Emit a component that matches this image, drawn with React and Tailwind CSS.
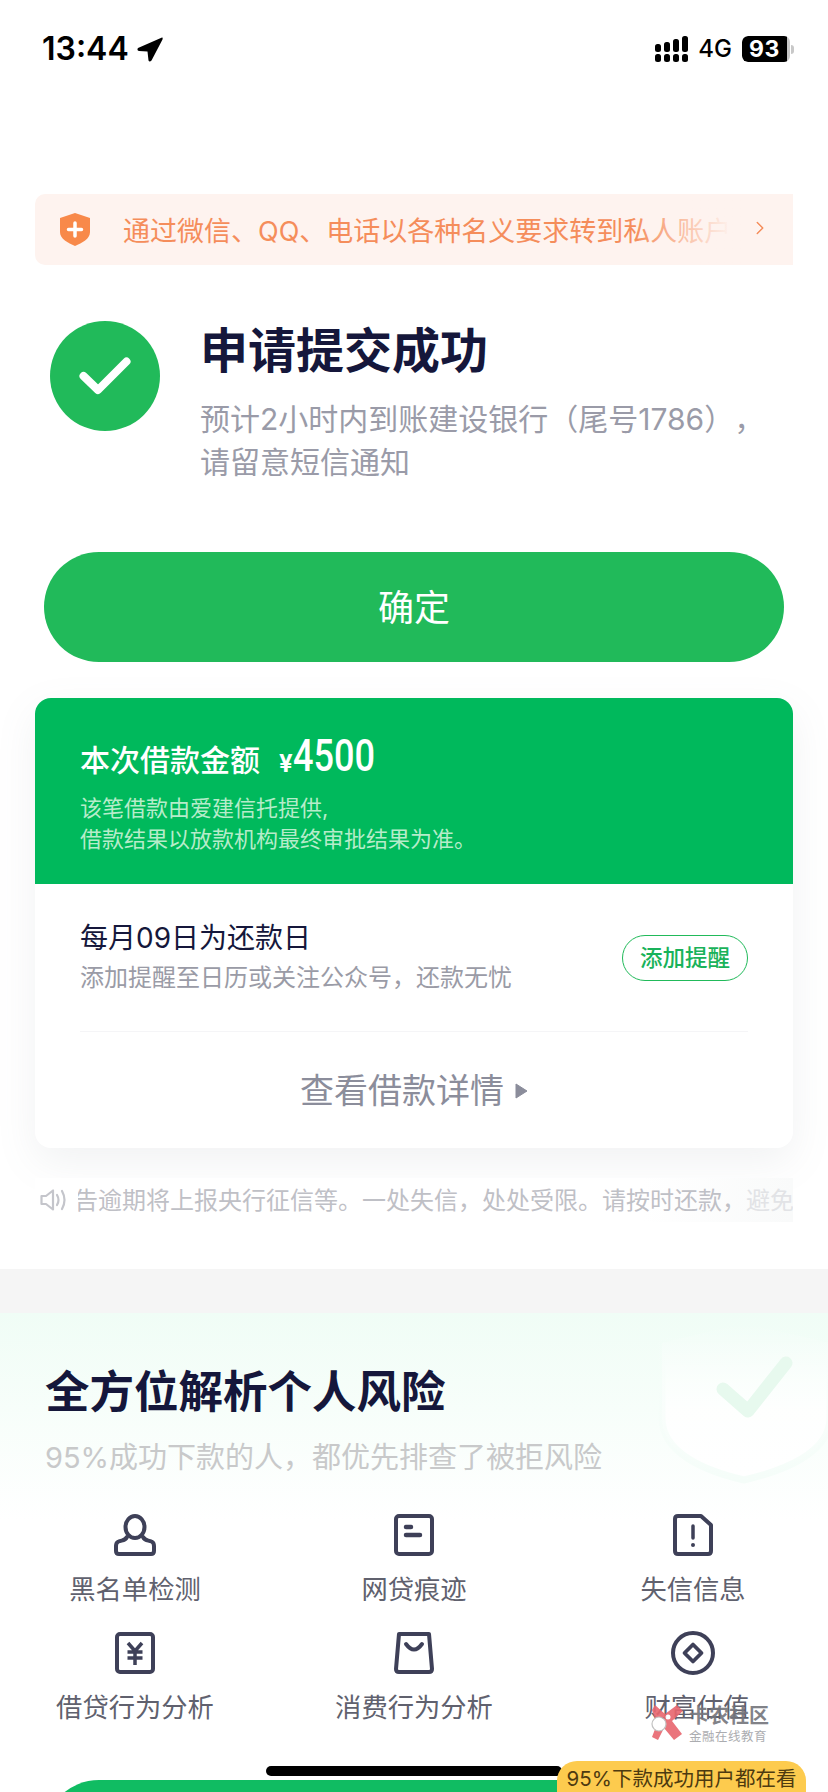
import { ChevronRight } from "lucide-react";

const FONT = "font-['Inter','Noto_Sans_CJK_SC',sans-serif] [text-spacing-trim:space-all]";

function SignalIcon() {
  const tops = [8, 6, 3, 0];
  return (
    <svg width="33" height="26" viewBox="0 0 33 26" fill="#000">
      {tops.map((top, i) => (
        <g key={i}>
          <rect x={i * 9} y={top} width="6" height={16 - top} rx="2.5" />
          <rect x={i * 9} y="18" width="6" height="8" rx="2.5" />
        </g>
      ))}
    </svg>
  );
}

function Battery() {
  return (
    <div className="flex items-center">
      <div className="flex h-[26px] w-[48px] overflow-hidden rounded-[6px] bg-[#c8c8c8]">
        <div className="flex h-full w-[45px] items-center justify-center rounded-l-[6px] bg-black text-[23px] font-bold tracking-[0.5px] text-white">
          93
        </div>
      </div>
      <div className="ml-[1px] h-[9px] w-[3px] rounded-r-[3px] bg-[#c8c8c8]" />
    </div>
  );
}

function StatusBar() {
  return (
    <div className="flex h-[98px] items-center justify-between pl-[42px] pr-[34px]">
      <div className="flex items-center gap-[8px]">
        <span className="text-[32px] leading-none font-semibold text-black">13:44</span>
        <svg width="26" height="25" viewBox="0 0 26 25">
          <path d="M25 0.5 L1 11 Q-0.5 13.5 2 14 L10.5 14.5 L11.5 23.5 Q12.5 25.5 14.5 23.5 L25.5 2.5 Q26 0 25 0.5 Z" fill="#000" />
        </svg>
      </div>
      <div className="flex items-center gap-[10px]">
        <SignalIcon />
        <span className="text-[24px] leading-none font-medium text-black">4G</span>
        <Battery />
      </div>
    </div>
  );
}

function NoticeBanner() {
  return (
    <div className="relative mx-[35px] mt-[96px] flex h-[71px] items-center overflow-hidden rounded-l-[10px] bg-[#fef3ef] pl-[25px]">
      <svg width="30" height="33" viewBox="0 0 30 33" className="shrink-0">
        <path d="M15 0 L30 5 V19 C30 26 22 30 15 33 C8 30 0 26 0 19 V5 Z" fill="#f8894a" />
        <path d="M15 10 V23 M8.5 16.5 H21.5" stroke="#fff" strokeWidth="3.5" strokeLinecap="round" />
      </svg>
      <div className="ml-[33px] w-[606px] overflow-hidden pt-[5px] text-[27px] whitespace-nowrap text-[#f58d5b]">
        通过微信、QQ、电话以各种名义要求转到私人账户
      </div>
      <div className="absolute top-0 right-[50px] h-full w-[110px] bg-gradient-to-r from-[#fef3ef00] to-[#fef3ef] to-90%" />
      <ChevronRight className="absolute top-[23px] right-[22px]" size={22} strokeWidth={1.6} color="#f58d5b" />
    </div>
  );
}

function ResultRow() {
  return (
    <div className="mt-[56px] flex pl-[50px]">
      <div className="flex h-[110px] w-[110px] shrink-0 items-center justify-center rounded-full bg-[#21ba5a]">
        <svg width="52" height="38" viewBox="0 0 52 38">
          <path d="M4.5 19 L19 33 L47.5 4.5" fill="none" stroke="#fff" strokeWidth="8" strokeLinecap="round" strokeLinejoin="round" />
        </svg>
      </div>
      <div className="ml-[40px]">
        <div className="h-[60px] text-[48px] leading-[60px] font-bold text-[#15173b]">申请提交成功</div>
        <div className="mt-[17px] w-[600px] text-[30px] leading-[43px] text-[#9a9ba8]">
          预计2小时内到账建设银行（尾号1786），
          <br />
          请留意短信通知
        </div>
      </div>
    </div>
  );
}

function LoanCard() {
  return (
    <div className="mx-[35px] mt-[36px] h-[450px] overflow-hidden rounded-[16px] bg-white shadow-[0_14px_40px_rgba(120,130,140,0.1)]">
      <div className="h-[186px] bg-[#00b95c] px-[45px] pt-[40px]">
        <div className="flex h-[44px] items-end">
          <span className="text-[30px] leading-[44px] font-medium text-white">本次借款金额</span>
          <span className="ml-[19px] text-[24px] leading-[36px] font-bold text-white">¥</span>
          <span className="mb-[4px] inline-block origin-left scale-x-[.82] font-['Roboto',sans-serif] text-[44px] leading-[44px] font-medium text-white">4500</span>
        </div>
        <div className="mt-[11px] text-[22px] leading-[31px] text-[#b6ecca]">
          该笔借款由爱建信托提供,
          <br />
          借款结果以放款机构最终审批结果为准。
        </div>
      </div>
      <div className="px-[45px]">
        <div className="flex h-[148px] items-center justify-between border-b border-[#f5f5f7]">
          <div>
            <div className="text-[28px] leading-[39px] text-[#15173b]">每月09日为还款日</div>
            <div className="text-[24px] leading-[39px] text-[#9a9ba6]">添加提醒至日历或关注公众号，还款无忧</div>
          </div>
          <div className="flex h-[46px] w-[126px] items-center justify-center rounded-full border border-[#21ba5a] text-[22.5px] font-medium text-[#19b25a]">
            添加提醒
          </div>
        </div>
        <div className="flex h-[115px] items-center justify-center pt-[2px]">
          <span className="text-[34px] text-[#8b8d9b]">查看借款详情</span>
          <svg width="13" height="16" viewBox="0 0 13 16" className="ml-[11px]">
            <path d="M1 1 L12 8 L1 15 Z" fill="#8b8d9b" strokeLinejoin="round" stroke="#8b8d9b" />
          </svg>
        </div>
      </div>
    </div>
  );
}

function Marquee() {
  return (
    <div className="relative mx-[35px] mt-[30px] flex h-[44px] items-center bg-gradient-to-r from-white from-80% to-[#f9fafa]">
      <svg width="28" height="24" viewBox="0 0 28 24" className="ml-[5px] shrink-0" fill="none" stroke="#c4c5cb" strokeWidth="2.2" strokeLinejoin="round" strokeLinecap="round">
        <path d="M1.5 8 H6 L13 2.5 V21.5 L6 16 H1.5 Z" />
        <path d="M17 7 Q20 12 17 17" />
        <path d="M22 3 Q27 12 22 21" />
      </svg>
      <div className="ml-[10px] w-[715px] overflow-hidden pt-[2px] text-[24px] whitespace-nowrap text-[#bfc0c6]">
        <span className="ml-[-4px]">告逾期将上报央行征信等。一处失信，处处受限。请按时还款，<span className="text-[#e2e3e6]">避免</span></span>
      </div>
    </div>
  );
}

function RiskIcon({ name }) {
  const stroke = { fill: "none", stroke: "#3e4058", strokeWidth: 4, strokeLinecap: "round", strokeLinejoin: "round" };
  if (name === "person") {
    return (
      <svg width="44" height="42" viewBox="0 0 44 42">
        <ellipse cx="22" cy="13" rx="9.5" ry="11" fill="#e9f8f0" {...stroke} />
        <path d="M14 23 C12 27 9 26 5.5 27.5 Q3 28.5 3 32 V37 Q3 40 6 40 H38 Q41 40 41 37 V32 Q41 28.5 38.5 27.5 C35 26 32 27 30 23" {...stroke} />
      </svg>
    );
  }
  if (name === "doc") {
    return (
      <svg width="40" height="42" viewBox="0 0 40 42">
        <rect x="2" y="2" width="36" height="38" rx="3" {...stroke} />
        <path d="M12 13 H17 M12 21 H26" {...stroke} strokeWidth="4.5" />
      </svg>
    );
  }
  if (name === "alert") {
    return (
      <svg width="40" height="42" viewBox="0 0 40 42">
        <path d="M5 2 H28 L38 11 V37 Q38 40 35 40 H5 Q2 40 2 37 V5 Q2 2 5 2 Z" {...stroke} />
        <path d="M20 12 V24" {...stroke} strokeWidth="3.5" />
        <circle cx="20" cy="31" r="2" fill="#3e4058" />
      </svg>
    );
  }
  if (name === "yuan") {
    return (
      <svg width="40" height="42" viewBox="0 0 40 42">
        <rect x="2" y="2" width="36" height="38" rx="3" {...stroke} />
        <path d="M13 11 L20 19 L27 11 M12.5 20 H27.5 M12.5 26 H27.5 M20 19 V33" {...stroke} strokeWidth="3.5" strokeLinecap="butt" />
      </svg>
    );
  }
  if (name === "bag") {
    return (
      <svg width="40" height="42" viewBox="0 0 40 42">
        <path d="M5 2 H35 L38 37 Q38 40 35 40 H5 Q2 40 2 37 Z" {...stroke} />
        <path d="M12 12 Q20 23 28 12" {...stroke} />
      </svg>
    );
  }
  return (
    <svg width="44" height="44" viewBox="0 0 44 44">
      <circle cx="22" cy="22" r="20" {...stroke} />
      <path d="M22 13.5 L30.5 22 L22 30.5 L13.5 22 Z" {...stroke} strokeWidth="3.8" />
    </svg>
  );
}

const RISK_ITEMS = [
  { icon: "person", label: "黑名单检测" },
  { icon: "doc", label: "网贷痕迹" },
  { icon: "alert", label: "失信信息" },
  { icon: "yuan", label: "借贷行为分析" },
  { icon: "bag", label: "消费行为分析" },
  { icon: "coin", label: "财富估值", shift: true },
];

function RiskSection() {
  return (
    <div className="relative bg-gradient-to-b from-[#f0fdf6] to-white to-[36%]">
      {/* watermark shield */}
      <svg className="absolute top-0 right-0" width="170" height="175" viewBox="0 0 170 175">
        <defs>
          <linearGradient id="shieldFill" x1="0" y1="0" x2="0" y2="1">
            <stop offset="0" stopColor="#fff" stopOpacity="0" />
            <stop offset="0.55" stopColor="#fff" stopOpacity="0.85" />
            <stop offset="1" stopColor="#fff" />
          </linearGradient>
          <linearGradient id="shieldEdge" x1="0" y1="0" x2="0" y2="1">
            <stop offset="0" stopColor="#f5fdf9" stopOpacity="0" />
            <stop offset="1" stopColor="#f5fdf9" />
          </linearGradient>
        </defs>
        <path d="M86 10 L172 30 V105 C172 140 125 158 86 167 C47 158 4 140 4 105 V30 Z" fill="url(#shieldFill)" stroke="url(#shieldEdge)" strokeWidth="7" />
        <path d="M65 76 L90 98 L128 50" fill="none" stroke="#e7f9ee" strokeWidth="13" strokeLinecap="round" strokeLinejoin="round" />
      </svg>
      <div className="relative pt-[57px]">
        <div className="px-[45px] text-[44.5px] leading-[44px] font-bold text-[#15173b]">全方位解析个人风险</div>
        <div className="mt-[26px] px-[45px] text-[29px] leading-[36px] text-[#c8c9ca]">95%成功下款的人，都优先排查了被拒风险</div>
        <div className="mt-[38px] grid grid-cols-[270px_288px_270px] gap-y-[24px]">
          {RISK_ITEMS.map((item) => (
            <div key={item.label} className="flex flex-col items-center">
              <div className="flex h-[42px] items-center">
                <RiskIcon name={item.icon} />
              </div>
              <div className={`mt-[16px] text-[26.3px] leading-[36px] text-[#60616e] ${item.shift ? "ml-[8px]" : ""}`}>{item.label}</div>
            </div>
          ))}
        </div>
      </div>
      <div className="mx-[44px] mt-[54px] h-[110px] rounded-full bg-[#10bc62]" />
    </div>
  );
}

function ForumMark() {
  return (
    <div className="absolute top-[1704px] left-[650px] flex items-start opacity-90">
      <svg width="34" height="37" viewBox="0 0 34 37">
        <path d="M5 1 L15 10 L27 1 L33 7 L22 17 L32 30 L24 36 L14 24 L8 36 L2 33 L7 20 L2 6 Z" fill="#e8666e" />
        <circle cx="9" cy="20" r="7" fill="#fff" stroke="#bbb" strokeWidth="1.2" />
        <circle cx="18" cy="13" r="2.5" fill="#fff" />
      </svg>
      <div className="ml-[5px]">
        <div className="text-[20px] leading-[25px] font-bold text-[#74757c]">卡农社区</div>
        <div className="text-[12.5px] leading-[16px] tracking-[0.5px] text-[#a3a4a8]">金融在线教育</div>
      </div>
    </div>
  );
}

export default function App() {
  return (
    <div className={`relative h-[1792px] w-[828px] overflow-hidden bg-white ${FONT}`}>
      <StatusBar />
      <NoticeBanner />
      <ResultRow />
      <div className="mx-[44px] mt-[68px] flex h-[110px] items-center justify-center rounded-full bg-[#21ba5a] pt-[2px] text-[36px] text-white">
        确定
      </div>
      <LoanCard />
      <Marquee />
      <div className="mt-[47px] h-[44px] bg-[#f5f5f5]" />
      <RiskSection />
      <ForumMark />
      {/* home indicator */}
      <div className="absolute top-[1766px] left-[266px] h-[10px] w-[296px] rounded-full bg-black" />
      <div className="absolute top-[1761px] left-[557px] flex h-[40px] w-[249px] justify-center rounded-t-[20px] rounded-b-[10px] bg-[#fdcb4e] pt-[3px] text-[20.5px] leading-[30px] whitespace-nowrap text-[#4d3a10]">
        95%下款成功用户都在看
      </div>
    </div>
  );
}
